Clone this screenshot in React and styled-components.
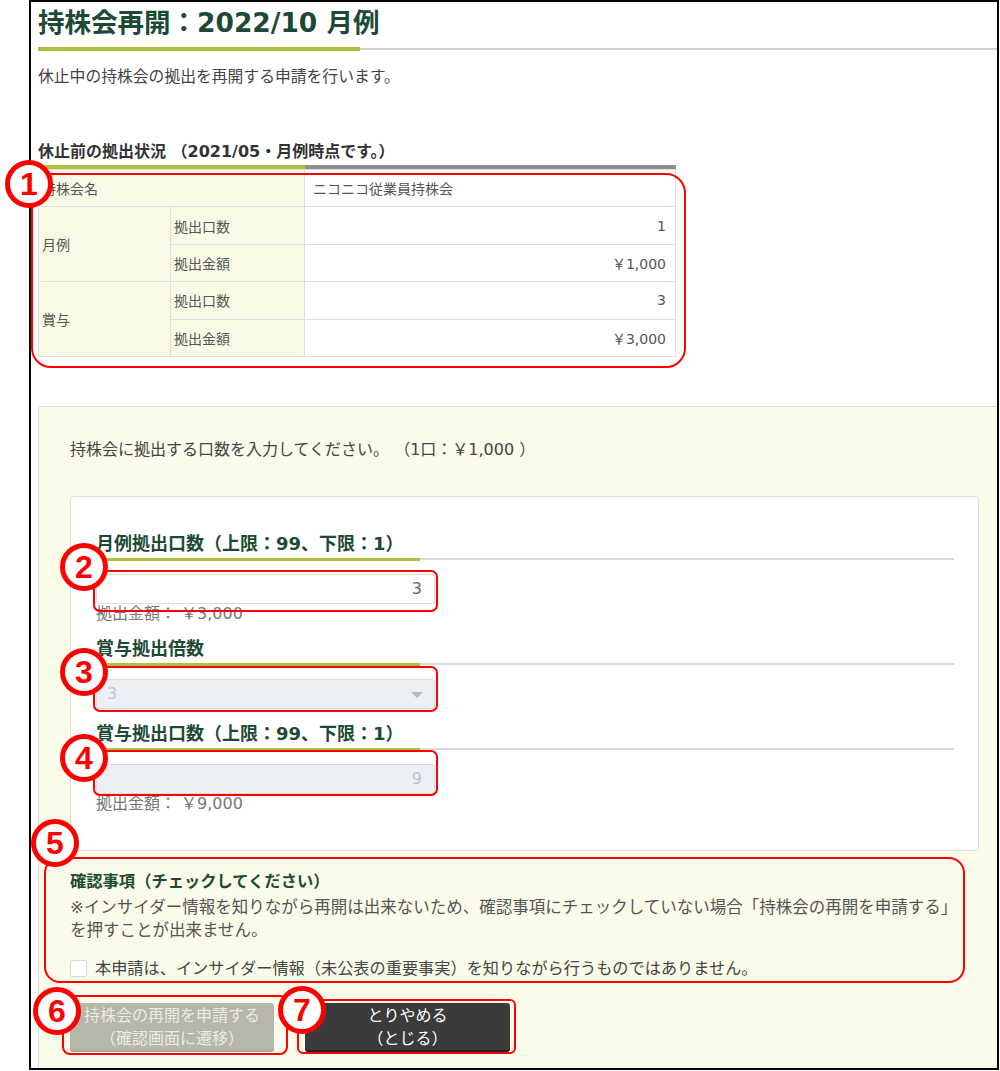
import styled, { createGlobalStyle } from "styled-components";

const GlobalStyle = createGlobalStyle`
  html, body { margin: 0; padding: 0; background: #fff; }
  body {
    font-family: "DejaVu Sans", "Noto Sans CJK JP", sans-serif;
    color: #444;
  }
  * { box-sizing: border-box; }
`;

const Page = styled.div`
  position: relative;
  width: 1000px;
  height: 1071px;
  overflow: hidden;
`;

const Frame = styled.div`
  margin-left: 29px;
  width: 970px;
  height: 1070px;
  border: 2px solid #000;
  overflow: hidden;
  padding-left: 7px;
`;

const PageTitle = styled.h1`
  margin: 0;
  padding-top: 3px;
  font-size: 26.5px;
  line-height: 36px;
  font-weight: bold;
  color: #1d4a35;
`;

const Rule = styled.div`
  display: flex;
  align-items: ${(p) => p.$align || "flex-start"};
  height: ${(p) => p.$h}px;
  margin-top: ${(p) => p.$mt}px;
  width: ${(p) => (p.$w ? `${p.$w}px` : "auto")};

  &::before {
    content: "";
    width: ${(p) => p.$green}px;
    height: 100%;
    background: #a9c23f;
  }
  &::after {
    content: "";
    flex: 1;
    height: ${(p) => p.$grayH}px;
    background: ${(p) => p.$gray};
  }
`;

const Lead = styled.p`
  margin: 14px 0 0;
  font-size: 15.8px;
  line-height: 24px;
  color: #444;
`;

const SectionTitle = styled.h2`
  margin: 52px 0 0;
  font-size: 16px;
  line-height: 22px;
  font-weight: bold;
  color: #333;
`;

const Table = styled.table`
  width: 638px;
  border-collapse: collapse;
  table-layout: fixed;
  font-size: 14px;
  color: #555;
`;

const Cell = styled.td`
  height: 37.4px;
  border: 1px solid #dedede;
  padding: 0 ${(p) => (p.$right ? "9px" : "8px")} 0 ${(p) => (p.$label ? "3px" : "8px")};
  background: ${(p) => (p.$label ? "#f9fae5" : "#fff")};
  text-align: ${(p) => (p.$right ? "right" : "left")};
  vertical-align: middle;
`;

const Panel = styled.section`
  margin: 49px -14px 0 0;
  background: #fafbe9;
  border: 1px solid #dcdccf;
  border-radius: 4px 4px 0 0;
  padding: 31px 31px 60px 31px;
`;

const PanelLead = styled.p`
  margin: 0;
  font-size: 16px;
  line-height: 24px;
  color: #444;
`;

const Card = styled.div`
  margin-top: 34px;
  background: #fff;
  border: 1px solid #dddddd;
  border-radius: 4px;
  padding: 36px 24px 36px 25px;
`;

const FieldLabel = styled.h3`
  margin: ${(p) => (p.$first ? "0" : "14px 0 0")};
  font-size: 18px;
  line-height: 22px;
  font-weight: bold;
  color: #1d4a35;
`;

const TextInput = styled.input`
  display: block;
  margin-top: 13px;
  width: 339px;
  height: 30px;
  border: 1px solid #dcdcdc;
  border-radius: 3px;
  padding: 0 12px;
  font: inherit;
  font-size: 16px;
  text-align: right;
  color: ${(p) => (p.disabled ? "#bfc1c8" : "#666")};
  background: ${(p) => (p.disabled ? "#eceff4" : "#fff")};
  outline: none;
`;

const SelectWrap = styled.div`
  position: relative;
  margin-top: 13px;
  width: 339px;

  &::after {
    content: "";
    position: absolute;
    right: 12px;
    top: 13px;
    border-left: 6px solid transparent;
    border-right: 6px solid transparent;
    border-top: 6px solid #b5b9c4;
  }
`;

const Select = styled.select`
  display: block;
  width: 100%;
  height: 30px;
  appearance: none;
  border: 1px solid #dcdde2;
  border-radius: 3px;
  padding: 0 10px;
  font: inherit;
  font-size: 16px;
  color: #c3c5cc;
  background: #eceff4;
  opacity: 1;
`;

const Amount = styled.div`
  font-size: 16px;
  line-height: 20px;
  color: #777;
`;

const ConfirmTitle = styled.h3`
  margin: 20px 0 0;
  font-size: 16.3px;
  line-height: 22px;
  font-weight: bold;
  color: #1d4a35;
`;

const Notice = styled.p`
  margin: 3px 0 0;
  font-size: 16.5px;
  line-height: 23px;
  color: #555;
`;

const CheckRow = styled.label`
  display: flex;
  align-items: center;
  margin-top: 15px;
  font-size: 16.2px;
  line-height: 24px;
  color: #444;
`;

const CheckBox = styled.span`
  width: 17px;
  height: 17px;
  margin-right: 8px;
  background: #fff;
  border: 1px solid #d6d6d6;
  border-radius: 2px;
`;

const Buttons = styled.div`
  display: flex;
  gap: 31px;
  margin-top: 22px;
`;

const Button = styled.button`
  width: ${(p) => p.$w}px;
  height: 47px;
  border: none;
  border-radius: 3px;
  font: inherit;
  font-size: 16px;
  line-height: 23px;
  background: ${(p) => (p.$dark ? "#3b3b3b" : "#b6b6a9")};
  color: ${(p) => (p.$dark ? "#fff" : "#ecece4")};
  box-shadow: ${(p) => (p.$dark ? "0 2px 0 #222" : "0 2px 0 #a5a597")};
`;

const Outline = styled.div`
  position: absolute;
  left: ${(p) => p.$x}px;
  top: ${(p) => p.$y}px;
  width: ${(p) => p.$w}px;
  height: ${(p) => p.$h}px;
  border: 2.5px solid #f00;
  border-radius: ${(p) => p.$r}px;
  pointer-events: none;
`;

const Marker = styled.div`
  position: absolute;
  left: ${(p) => p.$x - 24}px;
  top: ${(p) => p.$y - 24}px;
  width: 48px;
  height: 48px;
  border: 5px solid #f00;
  border-radius: 50%;
  background: #fff;
  display: flex;
  align-items: center;
  justify-content: center;
  font-family: "Liberation Sans", Arial, sans-serif;
  font-weight: bold;
  font-size: 32px;
  color: #f00;
`;

const outlines = [
  { x: 31, y: 173, w: 655, h: 195, r: 20 },
  { x: 93, y: 570, w: 345, h: 42, r: 7 },
  { x: 93, y: 666, w: 345, h: 46, r: 7 },
  { x: 93, y: 750, w: 345, h: 46, r: 7 },
  { x: 44, y: 857, w: 921, h: 126, r: 16 },
  { x: 62, y: 995, w: 226, h: 60, r: 8 },
  { x: 297, y: 999, w: 219, h: 55, r: 6 },
];

const markers = [
  { n: 1, x: 29, y: 184 },
  { n: 2, x: 84, y: 567 },
  { n: 3, x: 84, y: 672 },
  { n: 4, x: 84, y: 758 },
  { n: 5, x: 55, y: 843 },
  { n: 6, x: 57, y: 1011 },
  { n: 7, x: 302, y: 1010 },
];

export default function App() {
  return (
    <Page>
      <GlobalStyle />
      <Frame>
        <PageTitle>持株会再開：2022/10 月例</PageTitle>
        <Rule $mt={6} $h={4} $green={322} $grayH={2} $gray="#d2d2d2" $align="center" />
        <Lead>休止中の持株会の拠出を再開する申請を行います。</Lead>

        <SectionTitle>休止前の拠出状況 （2021/05・月例時点です。）</SectionTitle>
        <Rule $mt={2} $h={4} $w={638} $green={267} $grayH={4} $gray="#8e8e8e" />
        <Table>
          <colgroup>
            <col style={{ width: 132 }} />
            <col style={{ width: 134 }} />
            <col />
          </colgroup>
          <tbody>
            <tr>
              <Cell $label colSpan={2}>持株会名</Cell>
              <Cell>ニコニコ従業員持株会</Cell>
            </tr>
            <tr>
              <Cell $label rowSpan={2}>月例</Cell>
              <Cell $label>拠出口数</Cell>
              <Cell $right>1</Cell>
            </tr>
            <tr>
              <Cell $label>拠出金額</Cell>
              <Cell $right>￥1,000</Cell>
            </tr>
            <tr>
              <Cell $label rowSpan={2}>賞与</Cell>
              <Cell $label>拠出口数</Cell>
              <Cell $right>3</Cell>
            </tr>
            <tr>
              <Cell $label>拠出金額</Cell>
              <Cell $right>￥3,000</Cell>
            </tr>
          </tbody>
        </Table>

        <Panel>
          <PanelLead>持株会に拠出する口数を入力してください。 （1口：￥1,000 ）</PanelLead>
          <Card>
            <FieldLabel $first>月例拠出口数（上限：99、下限：1）</FieldLabel>
            <Rule $mt={3} $h={3} $green={324} $grayH={2} $gray="#d9d9d9" />
            <TextInput readOnly value="3" />
            <Amount>拠出金額： ￥3,000</Amount>

            <FieldLabel>賞与拠出倍数</FieldLabel>
            <Rule $mt={3} $h={3} $green={324} $grayH={2} $gray="#d9d9d9" />
            <SelectWrap>
              <Select disabled value="3" onChange={() => {}}>
                <option value="3">3</option>
              </Select>
            </SelectWrap>

            <FieldLabel>賞与拠出口数（上限：99、下限：1）</FieldLabel>
            <Rule $mt={3} $h={3} $green={324} $grayH={2} $gray="#d9d9d9" />
            <TextInput disabled readOnly value="9" />
            <Amount>拠出金額： ￥9,000</Amount>
          </Card>

          <ConfirmTitle>確認事項（チェックしてください）</ConfirmTitle>
          <Notice>
            ※インサイダー情報を知りながら再開は出来ないため、確認事項にチェックしていない場合「持株会の再開を申請する」
            <br />
            を押すことが出来ません。
          </Notice>
          <CheckRow>
            <CheckBox />
            本申請は、インサイダー情報（未公表の重要事実）を知りながら行うものではありません。
          </CheckRow>

          <Buttons>
            <Button $w={204} disabled>
              持株会の再開を申請する
              <br />
              （確認画面に遷移）
            </Button>
            <Button $w={205} $dark>
              とりやめる
              <br />
              （とじる）
            </Button>
          </Buttons>
        </Panel>
      </Frame>

      {outlines.map((o, i) => (
        <Outline key={i} $x={o.x} $y={o.y} $w={o.w} $h={o.h} $r={o.r} />
      ))}
      {markers.map((m) => (
        <Marker key={m.n} $x={m.x} $y={m.y}>
          {m.n}
        </Marker>
      ))}
    </Page>
  );
}
